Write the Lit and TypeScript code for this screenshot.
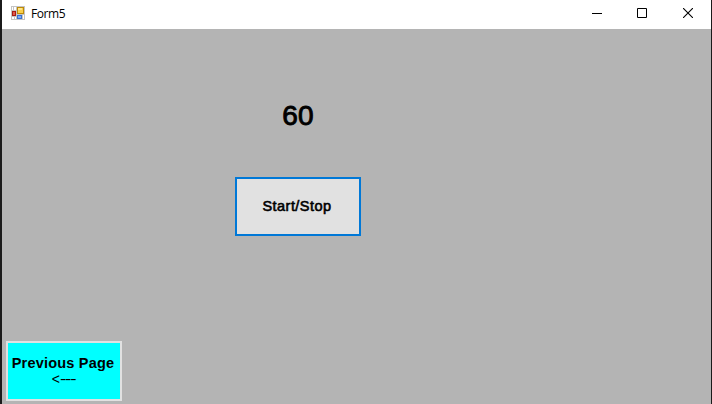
import { LitElement, html, css, svg } from "lit";
import { customElement, state } from "lit/decorators.js";

@customElement("title-bar")
class TitleBar extends LitElement {
  static styles = css`
    :host { display: flex; height: 29px; background: #fff; color: #000; align-items: flex-start; }
    svg { display: block; }
    .logo { margin: 6px 6px 0 9px; }
    .name { flex: 1; font: 12px/16px "Open Sans", "Noto Sans", sans-serif; margin-top: 6px; letter-spacing: -0.4px; }
    .controls { display: flex; }
    .control { width: 46px; display: flex; padding-top: 8px; }
    .control svg { margin-left: 18px; }
    .control:first-child { width: 45px; }
  `;
  render() {
    return html`
      <svg class="logo" width="14" height="14" viewBox="0 0 14 14" shape-rendering="crispEdges">
        <rect width="14" height="14" fill="#c4c4c4" />
        <path d="M1 1h4v3H1zM1 11h4v2H1zM12 9h1v4h-1z" fill="#fff" />
        <path d="M2 1h1v3H2zM3 11h1v2H3z" fill="#c4c4c4" />
        <rect x="1" y="5" width="4" height="5" fill="#a61b12" />
        <rect x="2" y="6" width="2" height="3" fill="#e0574a" />
        <rect x="6" y="1" width="7" height="7" fill="#bd8908" />
        <rect x="7" y="2" width="5" height="5" fill="#f8cf4c" />
        <rect x="7" y="2" width="4" height="2" fill="#ffe68a" />
        <rect x="6" y="9" width="5" height="4" fill="#3a70cf" />
        <rect x="7" y="10" width="3" height="2" fill="#78a9f5" />
      </svg>
      <div class="name">Form5</div>
      <div class="controls">
        ${[
          svg`<path d="M0 5.5h10" stroke="#000" />`,
          svg`<path d="M.5.5h9v9h-9z" fill="none" stroke="#000" />`,
          svg`<path d="M0 0l10 10M10 0L0 10" stroke="#000" stroke-width="1.1" />`,
        ].map((g) => html`<div class="control"><svg width="10" height="10" viewBox="0 0 10 10">${g}</svg></div>`)}
      </div>
    `;
  }
}

@customElement("app-root")
class AppRoot extends LitElement {
  static styles = css`
    :host {
      display: flex; flex-direction: column; box-sizing: border-box; width: 712px; height: 404px;
      border-left: 2px solid #1b1b1b; border-right: 1px solid #1b1b1b; overflow: hidden;
      background: #b4b4b4; color: #000; font-family: "Liberation Sans", Arial, sans-serif;
    }
    .form { flex: 1; display: flex; flex-direction: column; align-items: flex-start; padding: 71px 0 3px 4px; }
    .timer { width: 126px; margin-left: 229px; display: flex; flex-direction: column; align-items: center; gap: 45px; }
    .count { font-size: 28px; line-height: 32px; -webkit-text-stroke: 0.9px #000; letter-spacing: 0.3px; }
    button { box-sizing: border-box; margin: 0; padding: 0; color: #000; font-family: inherit; border-radius: 0; }
    .toggle {
      width: 126px; height: 59px; background: #e1e1e1; border: 2px solid #0078d7; padding: 0 2px 2px 0;
      font-size: 14.5px; line-height: 16px; -webkit-text-stroke: 0.6px #000; letter-spacing: 0.45px;
    }
    .previous {
      width: 116px; height: 60px; margin-top: auto; background: #00ffff; border: 2px solid #e1e1e1;
      padding-right: 2px; font-size: 14.5px; line-height: 16px; font-weight: bold; letter-spacing: 0.2px;
      white-space: nowrap;
    }
    .arrow { font-size: 14px; font-weight: normal; letter-spacing: 0; height: 16px; }
    .shaft {
      display: inline-block; letter-spacing: -0.9px; transform: scaleX(1.35);
      transform-origin: left; margin-right: 3px;
    }
  `;
  @state() private count = 60;
  render() {
    return html`
      <title-bar></title-bar>
      <div class="form">
        <div class="timer">
          <div class="count">${this.count}</div>
          <button class="toggle">Start/Stop</button>
        </div>
        <button class="previous"><div>Previous Page</div><div class="arrow">&lt;<span class="shaft">---</span></div></button>
      </div>
    `;
  }
}
